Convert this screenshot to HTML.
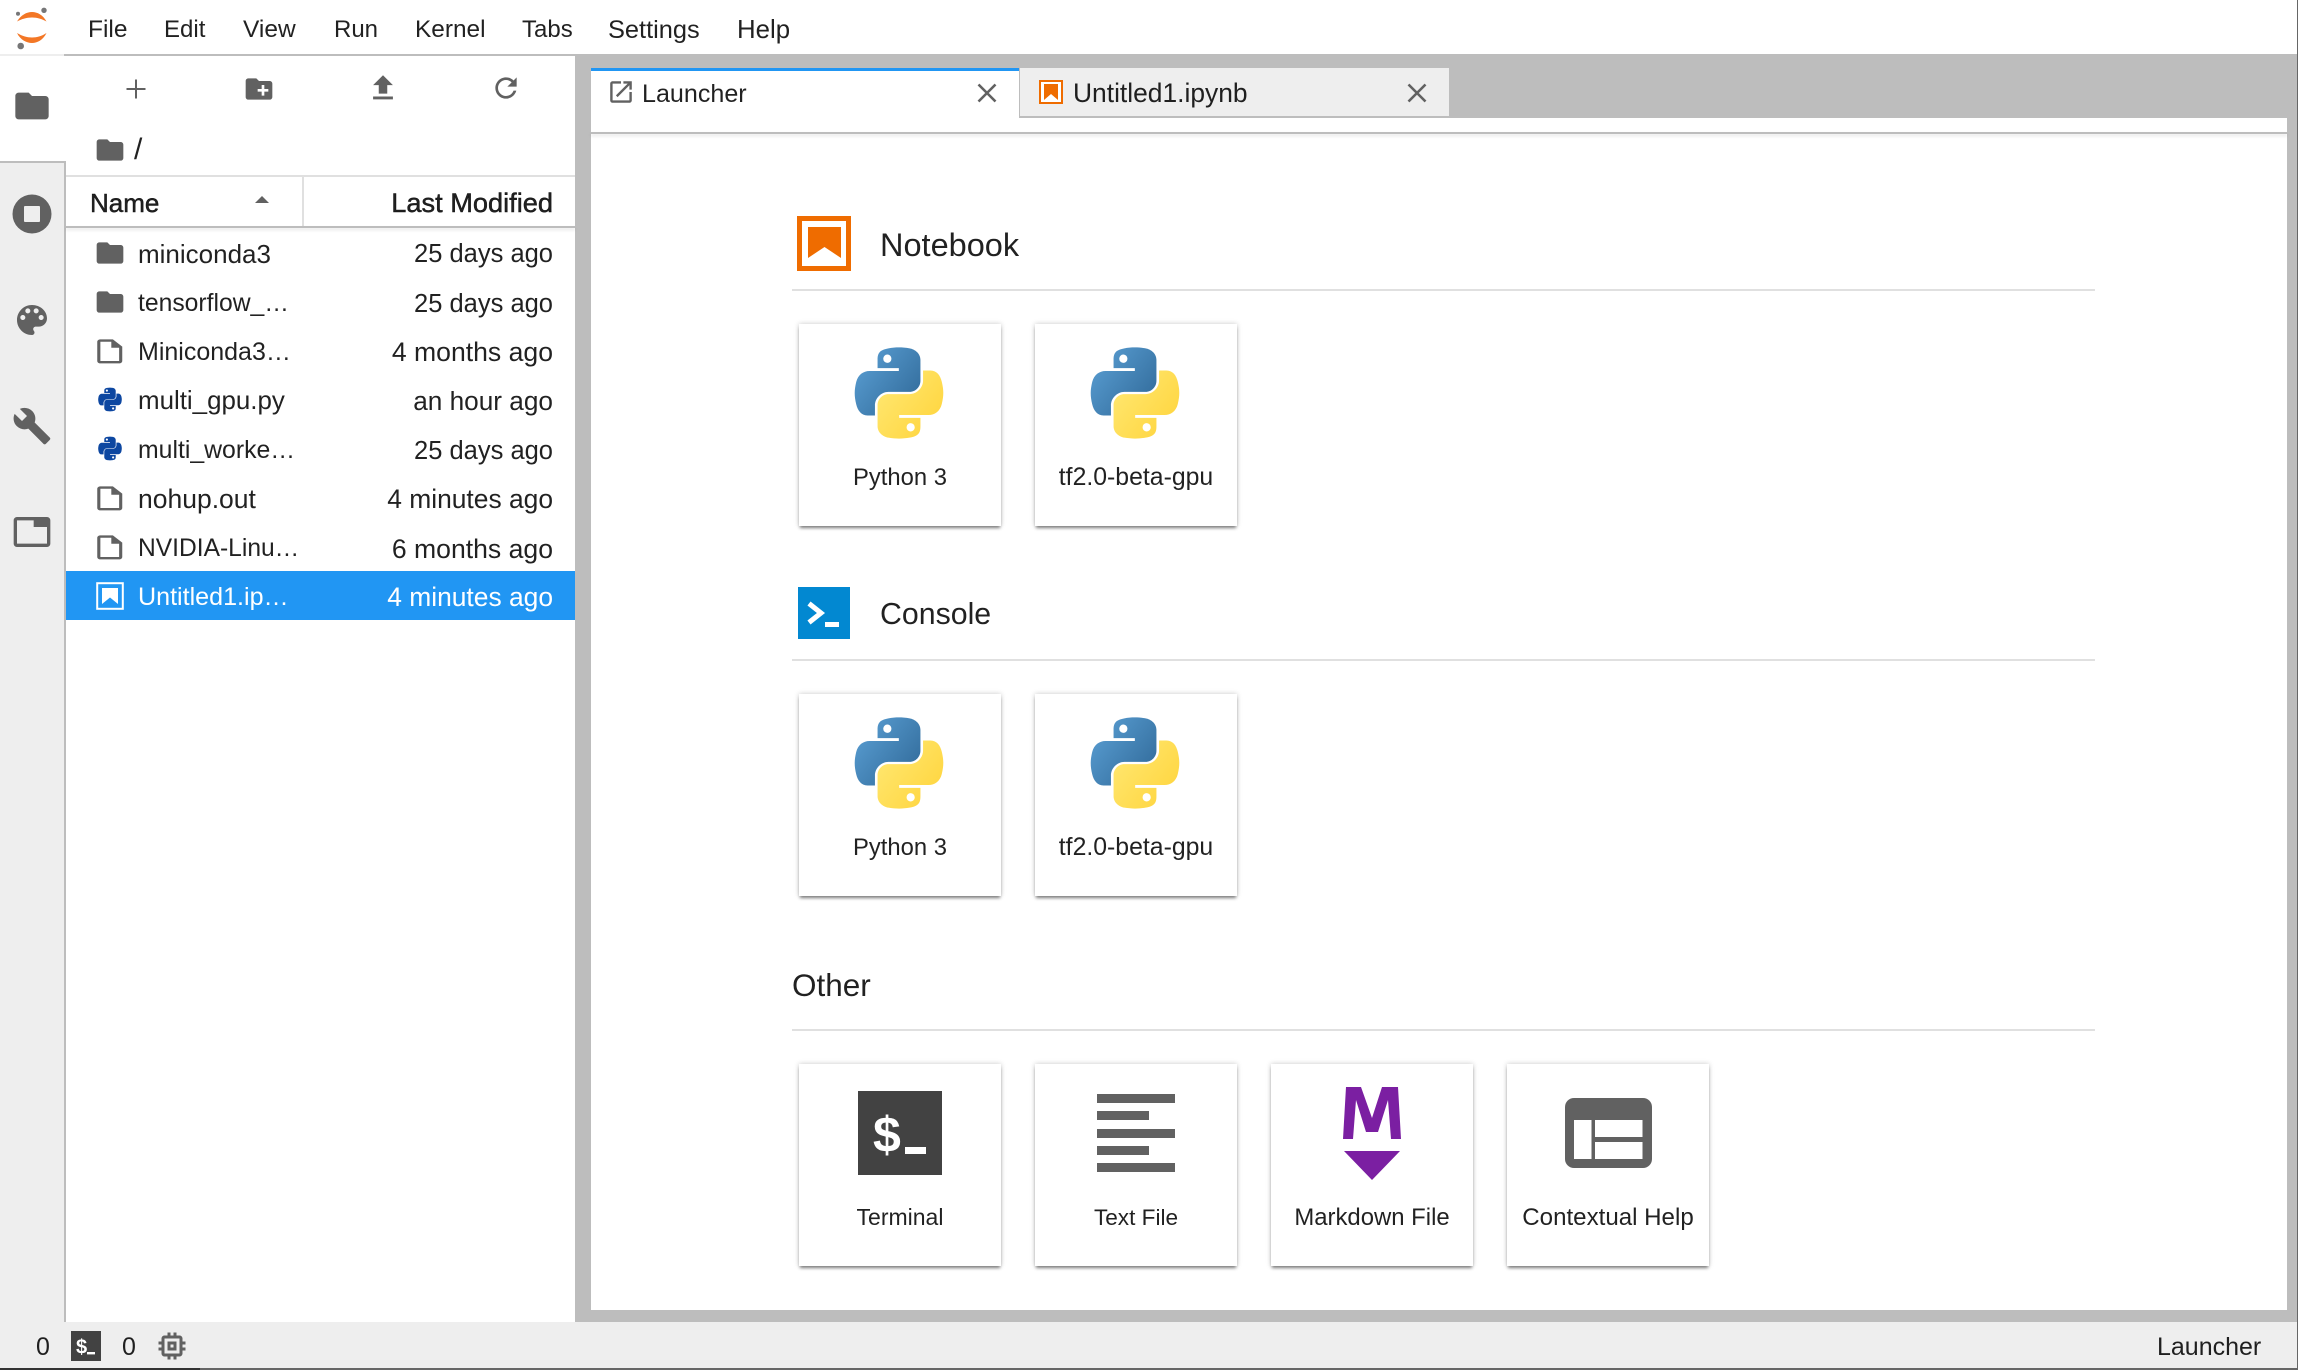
<!DOCTYPE html>
<html lang="en">
<head>
<meta charset="utf-8">
<title>JupyterLab</title>
<style>
html,body{margin:0;padding:0;background:#fff}
body{position:relative;width:2298px;height:1370px;overflow:hidden;font-family:"Liberation Sans",sans-serif;color:rgba(0,0,0,.87)}
.a{position:absolute}
.t{position:absolute;white-space:nowrap;line-height:40px;height:40px}
svg{position:absolute;display:block;overflow:visible}
.ic{fill:#616161}
.card{position:absolute;width:202px;height:202px;background:#fff;box-shadow:0 3px 3px -1px rgba(0,0,0,.45),0 0 5px rgba(0,0,0,.22)}
.card span{position:absolute;left:-20px;right:-20px;top:134px;text-align:center;line-height:40px;white-space:nowrap}
.rule{position:absolute;left:792px;width:1303px;height:2px;background:#e0e0e0}
.h{position:absolute;left:880px;font-size:32.500px;line-height:44px;white-space:nowrap}
.tm{left:353px;width:200px;text-align:right}
</style>
</head>
<body>
<svg width="0" height="0" style="position:absolute">
<defs>
<linearGradient id="pb" x1="0" y1="0.1" x2="1" y2="0.9"><stop offset="0" stop-color="#5a9fd4"/><stop offset="1" stop-color="#306998"/></linearGradient>
<linearGradient id="py" x1="0" y1="0.1" x2="1" y2="0.9"><stop offset="0" stop-color="#ffd43b"/><stop offset="1" stop-color="#ffe873"/></linearGradient>
<path id="snake" fill-rule="evenodd" d="M54.900.5C50.300.5 45.900.9 42.100 1.600 30.800 3.600 28.800 7.700 28.800 15.300V25.300H54.800V28.700H19C11.400 28.700 4.800 33.200 2.700 41.900.3 51.900.2 58.100 2.700 68.500 4.600 76.300 9 81.900 16.600 81.900H25.600V70C25.600 61.300 33.100 53.700 42.100 53.700H68C75.300 53.700 81.200 47.600 81.200 40.400V15.300C81.200 8.200 75.200 2.900 68 1.600 63.500.9 58.900.5 54.900.5ZM40.800 9A5 5 0 1 1 40.700 19 5 5 0 1 1 40.800 9Z"/>
<g id="pylogo">
<use href="#snake" fill="url(#pb)"/>
<use href="#snake" fill="url(#py)" transform="rotate(180 55 55)"/>
</g>
<g id="pysmall" fill="#0d47a1">
<use href="#snake"/>
<use href="#snake" transform="rotate(180 55 55)"/>
</g>
<path id="folder" d="M10 4H4c-1.100 0-2 .9-2 2v12c0 1.100.9 2 2 2h16c1.100 0 2-.9 2-2V8c0-1.100-.9-2-2-2h-8l-2-2z"/>
<path id="file" d="M14 2H6c-1.100 0-2 .9-2 2v16c0 1.100.9 2 2 2h12c1.100 0 2-.9 2-2V8l-6-6zm4 18H6V4h7v5h5v11z"/>
</defs>
</svg>

<!-- top bar -->
<div class="a" style="left:0;top:0;width:2298px;height:54px;background:#fff"></div>
<svg style="left:14px;top:6px" width="38" height="44" viewBox="14 6 38 44">
<path fill="#f37726" d="M17 21.500C21 15 26.500 12 32 12s11 3 14.500 9.500C42 19 37.500 17.500 32 17.500s-10.500 1.500-15 4z"/>
<path fill="#f37726" d="M17 33c5 3 10 4.500 15 4.500s10-1.500 14.500-4.500C43 40 37.500 43 32 43s-11.500-3-15-10z"/>
<circle cx="44" cy="10.300" r="2.700" fill="#767677"/><circle cx="18" cy="13.800" r="2" fill="#767677"/><circle cx="20.700" cy="46" r="3.300" fill="#767677"/>
</svg>
<div class="t" style="left:88px;top:10px;font-size:24.500px">File</div>
<div class="t" style="left:164px;top:10px;font-size:24px">Edit</div>
<div class="t" style="left:243px;top:10px;font-size:24.500px">View</div>
<div class="t" style="left:334px;top:10px;font-size:24px">Run</div>
<div class="t" style="left:415px;top:10px;font-size:24.400px">Kernel</div>
<div class="t" style="left:522px;top:10px;font-size:24px">Tabs</div>
<div class="t" style="left:608px;top:10px;font-size:25.400px">Settings</div>
<div class="t" style="left:737px;top:10px;font-size:25.800px">Help</div>

<!-- gray background of main area -->
<div class="a" style="left:0;top:54px;width:2298px;height:1268px;background:#bdbdbd"></div>

<!-- activity bar -->
<div class="a" style="left:0;top:54px;width:64px;height:1268px;background:#eee"></div>
<div class="a" style="left:64px;top:54px;width:2px;height:1268px;background:#bdbdbd"></div>
<div class="a" style="left:0;top:56px;width:66px;height:105px;background:#fff"></div>
<div class="a" style="left:0;top:161px;width:66px;height:2px;background:#bdbdbd"></div>
<svg class="ic" style="left:12px;top:86px" width="40" height="40" viewBox="0 0 24 24"><use href="#folder"/></svg>
<svg style="left:12px;top:194px" width="40" height="40" viewBox="0 0 40 40"><circle cx="20" cy="20" r="19.500" fill="#616161"/><rect x="12" y="12" width="16" height="16" rx="1" fill="#eee"/></svg>
<svg class="ic" style="left:12px;top:300px" width="40" height="40" viewBox="0 0 24 24"><path d="M12 3c-4.970 0-9 4.030-9 9s4.030 9 9 9c.83 0 1.500-.67 1.500-1.500 0-.39-.15-.74-.39-1.010-.23-.26-.38-.61-.38-.99 0-.83.67-1.500 1.500-1.500H16c2.760 0 5-2.240 5-5 0-4.420-4.030-8-9-8zm-5.500 9c-.83 0-1.500-.67-1.500-1.500S5.670 9 6.500 9 8 9.670 8 10.500 7.330 12 6.500 12zm3-4C8.670 8 8 7.330 8 6.500S8.670 5 9.500 5s1.500.67 1.500 1.500S10.330 8 9.500 8zm5 0c-.83 0-1.500-.67-1.500-1.500S13.670 5 14.500 5s1.500.67 1.500 1.500S15.330 8 14.500 8zm3 4c-.83 0-1.500-.67-1.500-1.500S16.670 9 17.500 9s1.500.67 1.500 1.500-.67 1.500-1.500 1.500z"/></svg>
<svg class="ic" style="left:12px;top:406px" width="40" height="40" viewBox="0 0 24 24"><path d="M22.700 19l-9.100-9.100c.9-2.300.4-5-1.500-6.900-2-2-5-2.400-7.400-1.300L9 6 6 9 1.600 4.700C.4 7.100.9 10.100 2.900 12.100c1.900 1.900 4.600 2.400 6.900 1.500l9.100 9.100c.4.400 1 .4 1.400 0l2.300-2.300c.5-.4.5-1.100.1-1.400z"/></svg>
<svg class="ic" style="left:12px;top:512px" width="40" height="40" viewBox="0 0 24 24"><path d="M21 3H3c-1.100 0-2 .9-2 2v14c0 1.100.9 2 2 2h18c1.100 0 2-.9 2-2V5c0-1.100-.9-2-2-2zm0 16H3V5h10v4h8v10z"/></svg>

<!-- file browser -->
<div class="a" style="left:66px;top:56px;width:509px;height:1266px;background:#fff"></div>
<svg class="ic" style="left:116px;top:69px" width="40" height="40" viewBox="0 0 40 40"><rect x="10.500" y="19" width="19" height="2"/><rect x="19" y="10.500" width="2" height="19"/></svg>
<svg class="ic" style="left:243px;top:73px" width="32" height="32" viewBox="0 0 24 24"><path d="M20 6h-8l-2-2H4c-1.110 0-1.990.89-1.990 2L2 18c0 1.110.89 2 2 2h16c1.110 0 2-.89 2-2V8c0-1.110-.89-2-2-2zm-1 8h-3v3h-2v-3h-3v-2h3V9h2v3h3v2z"/></svg>
<svg class="ic" style="left:366px;top:71px" width="34" height="34" viewBox="0 0 24 24"><path d="M9 16h6v-6h4l-7-7-7 7h4zm-4 2h14v2H5z"/></svg>
<svg class="ic" style="left:490px;top:72px" width="32" height="32" viewBox="0 0 24 24"><path d="M17.650 6.350C16.200 4.900 14.210 4 12 4c-4.420 0-7.990 3.580-7.990 8s3.570 8 7.990 8c3.730 0 6.840-2.550 7.730-6h-2.080c-.82 2.330-3.040 4-5.650 4-3.310 0-6-2.690-6-6s2.690-6 6-6c1.660 0 3.140.69 4.220 1.780L13 11h7V4l-2.350 2.350z"/></svg>
<svg class="ic" style="left:94px;top:134px" width="32" height="32" viewBox="0 0 24 24"><use href="#folder"/></svg>
<div class="t" style="left:134px;top:130px;font-size:30px">/</div>

<div class="a" style="left:66px;top:175px;width:509px;height:2px;background:#e0e0e0"></div>
<div class="a" style="left:302px;top:177px;width:2px;height:49px;background:#e0e0e0"></div>
<div class="a" style="left:66px;top:226px;width:509px;height:2px;background:#bdbdbd;box-shadow:0 2px 3px rgba(0,0,0,.12)"></div>
<div class="t" style="left:90px;top:183px;font-size:26px;-webkit-text-stroke:.45px rgba(0,0,0,.87)">Name</div>
<svg style="left:254px;top:195px" width="16" height="9" viewBox="0 0 16 9"><path d="M8 1l7 7H1z" fill="#616161"/></svg>
<div class="t tm" style="top:183px;font-size:27.200px;-webkit-text-stroke:.45px rgba(0,0,0,.87)">Last Modified</div>

<!-- rows -->
<div class="a" style="left:66px;top:571px;width:509px;height:49px;background:#2196f3"></div>

<svg class="ic" style="left:94px;top:237px" width="32" height="32" viewBox="0 0 24 24"><use href="#folder"/></svg>
<div class="t" style="left:138px;top:234px;font-size:26px">miniconda3</div>
<div class="t tm" style="top:234px;font-size:25.500px">25 days ago</div>

<svg class="ic" style="left:94px;top:286px" width="32" height="32" viewBox="0 0 24 24"><use href="#folder"/></svg>
<div class="t" style="left:138px;top:284px;font-size:24.700px">tensorflow_…</div>
<div class="t tm" style="top:284px;font-size:25.500px">25 days ago</div>

<svg style="left:91px;top:337px" class="ic" width="37.500" height="28.800" viewBox="0 0 24 24" preserveAspectRatio="none"><use href="#file"/></svg>
<div class="t" style="left:138px;top:332px;font-size:25px">Miniconda3…</div>
<div class="t tm" style="top:332px;font-size:26.600px">4 months ago</div>

<svg style="left:98px;top:387px" width="24" height="25" viewBox="0 0 110 110"><use href="#pysmall"/></svg>
<div class="t" style="left:138px;top:381px;font-size:25.900px">multi_gpu.py</div>
<div class="t tm" style="top:381px;font-size:26.200px">an hour ago</div>

<svg style="left:98px;top:436px" width="24" height="25" viewBox="0 0 110 110"><use href="#pysmall"/></svg>
<div class="t" style="left:138px;top:431px;font-size:24.800px">multi_worke…</div>
<div class="t tm" style="top:431px;font-size:25.500px">25 days ago</div>

<svg style="left:91px;top:484px" class="ic" width="37.500" height="28.800" viewBox="0 0 24 24" preserveAspectRatio="none"><use href="#file"/></svg>
<div class="t" style="left:138px;top:479px;font-size:26.500px">nohup.out</div>
<div class="t tm" style="top:479px;font-size:26.400px">4 minutes ago</div>

<svg style="left:91px;top:533px" class="ic" width="37.500" height="28.800" viewBox="0 0 24 24" preserveAspectRatio="none"><use href="#file"/></svg>
<div class="t" style="left:138px;top:529px;font-size:24.600px">NVIDIA-Linu…</div>
<div class="t tm" style="top:529px;font-size:26.600px">6 months ago</div>

<svg style="left:96px;top:582px" width="28" height="28" viewBox="0 0 28 28"><rect x="1.200" y="1.200" width="25.600" height="25.600" fill="none" stroke="#fff" stroke-width="2"/><path d="M6 6h16v16l-8-6.500L6 22z" fill="#fff"/></svg>
<div class="t" style="left:138px;top:577px;font-size:25.100px;color:#fff">Untitled1.ip…</div>
<div class="t tm" style="top:577px;font-size:26.400px;color:#fff">4 minutes ago</div>

<!-- tab bar -->
<div class="a" style="left:591px;top:118px;width:1696px;height:1192px;background:#fff"></div>
<div class="a" style="left:591px;top:68px;width:428px;height:64px;background:#fff"></div>
<div class="a" style="left:591px;top:68px;width:428px;height:3px;background:#2196f3"></div>
<div class="a" style="left:1019px;top:68px;width:430px;height:48px;background:#eee;border-left:1px solid #bdbdbd;box-sizing:border-box"></div>
<div class="a" style="left:591px;top:132px;width:1696px;height:2px;background:#bdbdbd;box-shadow:0 2px 3px rgba(0,0,0,.12)"></div>

<svg style="left:609px;top:80px" width="24" height="24" viewBox="2 2 20 20"><path fill="#616161" d="M19 19H5V5h7V3H5c-1.110 0-2 .9-2 2v14c0 1.100.89 2 2 2h14c1.100 0 2-.9 2-2v-7h-2v7zM14 3v2h3.590l-9.830 9.830 1.410 1.410L19 6.410V10h2V3h-7z"/></svg>
<div class="t" style="left:642px;top:74px;font-size:25.100px">Launcher</div>
<svg style="left:977px;top:83px" width="20" height="20" viewBox="0 0 20 20"><path d="M1.500 1.500l17 17M18.500 1.500l-17 17" stroke="#616161" stroke-width="2.600" fill="none"/></svg>

<svg style="left:1039px;top:80px" width="24" height="24" viewBox="0 0 24 24"><rect x="1" y="1" width="22" height="22" fill="#fff" stroke="#ef6c00" stroke-width="2"/><path d="M5 4h14v16l-7-6-7 6z" fill="#ef6c00"/></svg>
<div class="t" style="left:1073px;top:73px;font-size:26.400px">Untitled1.ipynb</div>
<svg style="left:1407px;top:83px" width="20" height="20" viewBox="0 0 20 20"><path d="M1.500 1.500l17 17M18.500 1.500l-17 17" stroke="#616161" stroke-width="2.600" fill="none"/></svg>

<!-- Notebook section -->
<svg style="left:797px;top:216px" width="54" height="55" viewBox="0 0 54 55"><rect x="2.500" y="2.500" width="49" height="50" fill="#fff" stroke="#ef6c00" stroke-width="5"/><path d="M11 11h33v31L27.500 31 11 42z" fill="#ef6c00"/></svg>
<div class="h" style="top:223px">Notebook</div>
<div class="rule" style="top:289px"></div>

<div class="card" style="left:799px;top:324px"><span style="font-size:23.800px">Python 3</span></div>
<svg style="left:854px;top:347px" width="90" height="92" viewBox="0 0 110 110" preserveAspectRatio="none"><use href="#pylogo"/></svg>
<div class="card" style="left:1035px;top:324px"><span style="font-size:24.800px">tf2.0-beta-gpu</span></div>
<svg style="left:1090px;top:347px" width="90" height="92" viewBox="0 0 110 110" preserveAspectRatio="none"><use href="#pylogo"/></svg>

<!-- Console section -->
<svg style="left:798px;top:587px" width="52" height="52" viewBox="0 0 52 52"><rect width="52" height="52" fill="#0288d1"/><path d="M11 16.500l12 9.500-12 9.500" fill="none" stroke="#fff" stroke-width="5"/><rect x="27" y="35" width="14" height="5" fill="#fff"/></svg>
<div class="h" style="top:593px;font-size:30.300px">Console</div>
<div class="rule" style="top:659px"></div>

<div class="card" style="left:799px;top:694px"><span style="font-size:23.800px">Python 3</span></div>
<svg style="left:854px;top:717px" width="90" height="92" viewBox="0 0 110 110" preserveAspectRatio="none"><use href="#pylogo"/></svg>
<div class="card" style="left:1035px;top:694px"><span style="font-size:24.800px">tf2.0-beta-gpu</span></div>
<svg style="left:1090px;top:717px" width="90" height="92" viewBox="0 0 110 110" preserveAspectRatio="none"><use href="#pylogo"/></svg>

<!-- Other section -->
<div class="h" style="left:792px;top:963px;font-size:31.500px">Other</div>
<div class="rule" style="top:1029px"></div>

<div class="card" style="left:799px;top:1064px"><span style="font-size:23px;top:133px">Terminal</span></div>
<svg style="left:858px;top:1091px" width="84" height="84" viewBox="0 0 84 84"><rect width="84" height="84" fill="#424242"/><text x="15" y="61" font-family="Liberation Sans,sans-serif" font-weight="700" font-size="50" fill="#fff">$</text><rect x="47" y="56" width="21" height="7" fill="#fff"/></svg>

<div class="card" style="left:1035px;top:1064px"><span style="font-size:22.600px">Text File</span></div>
<div class="a" style="left:1097px;top:1094px;width:78px;height:9px;background:#616161"></div>
<div class="a" style="left:1097px;top:1111px;width:52px;height:9px;background:#616161"></div>
<div class="a" style="left:1097px;top:1129px;width:78px;height:8.500px;background:#616161"></div>
<div class="a" style="left:1097px;top:1146px;width:52px;height:9px;background:#616161"></div>
<div class="a" style="left:1097px;top:1163px;width:78px;height:9px;background:#616161"></div>

<div class="card" style="left:1271px;top:1064px"><span style="font-size:23.900px">Markdown File</span></div>
<svg style="left:1340px;top:1085px" width="64" height="98" viewBox="1340 1085 64 98"><path fill="#7b1fa2" d="M1343 1139L1346 1087H1361L1372 1118 1382 1087H1398L1401 1139H1391L1388 1100 1378 1132H1366L1356 1100 1353 1139Z"/><path fill="#7b1fa2" d="M1344 1151h56l-28 29z"/></svg>

<div class="card" style="left:1507px;top:1064px"><span style="font-size:24.100px">Contextual Help</span></div>
<svg style="left:1565px;top:1098px" width="87" height="70" viewBox="0 0 87 70"><rect width="87" height="70" rx="9" fill="#616161"/><rect x="9" y="22" width="17.500" height="39" fill="#fff"/><rect x="30" y="22" width="47.500" height="17" fill="#fff"/><rect x="30" y="44" width="47.500" height="17" fill="#fff"/></svg>

<!-- status bar -->
<div class="a" style="left:0;top:1322px;width:2298px;height:48px;background:#eee"></div>
<div class="a" style="left:0;top:1368px;width:2298px;height:2px;background:#666"></div>
<div class="a" style="left:0;top:1368px;width:200px;height:2px;background:#333"></div>
<div class="a" style="left:2297px;top:0;width:1px;height:1370px;background:#666"></div>
<div class="t" style="left:36px;top:1327px;font-size:25px">0</div>
<svg style="left:71px;top:1331px" width="30" height="30" viewBox="0 0 30 30"><rect width="30" height="30" fill="#424242"/><text x="5" y="22.500" font-family="Liberation Sans,sans-serif" font-weight="700" font-size="20" fill="#fff">$</text><rect x="16" y="21" width="8" height="2.400" fill="#fff"/></svg>
<div class="t" style="left:122px;top:1327px;font-size:25px">0</div>
<svg class="ic" style="left:154px;top:1328px" width="36" height="36" viewBox="0 0 24 24"><path d="M15 9H9v6h6V9zm-2 4h-2v-2h2v2zm8-2V9h-2V7c0-1.100-.9-2-2-2h-2V3h-2v2h-2V3H9v2H7c-1.100 0-2 .9-2 2v2H3v2h2v2H3v2h2v2c0 1.100.9 2 2 2h2v2h2v-2h2v2h2v-2h2c1.100 0 2-.9 2-2v-2h2v-2h-2v-2h2zm-4 6H7V7h10v10z"/></svg>
<div class="t" style="left:2157px;top:1327px;font-size:25px">Launcher</div>
</body>
</html>
